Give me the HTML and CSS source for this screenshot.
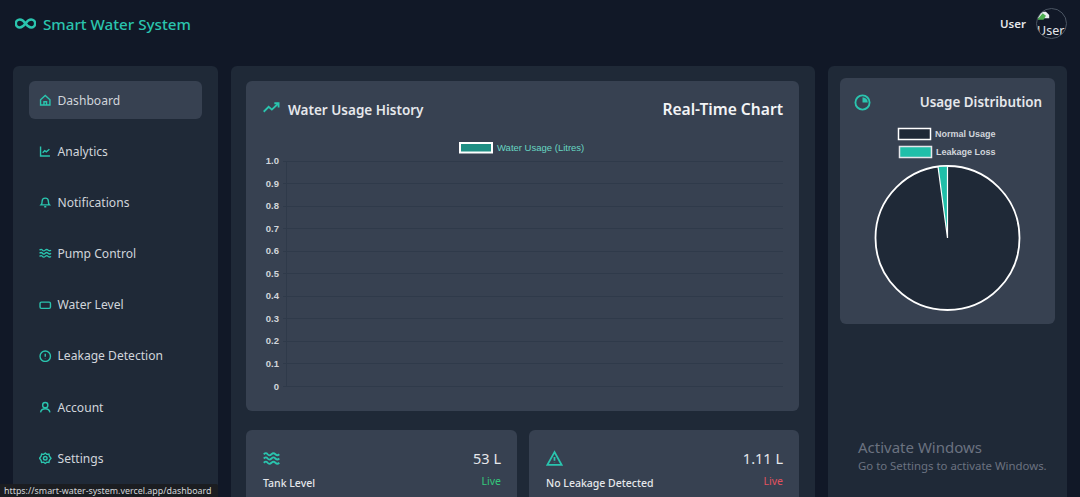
FILE: index.html
```html
<!DOCTYPE html>
<html lang="en">
<head>
<meta charset="utf-8">
<title>Smart Water System</title>
<link rel="stylesheet" href="styles.css">
</head>
<body>
<header class="topbar">
  <div class="brand">
    <svg class="brand-icon" viewBox="0 0 24 24" fill="none" stroke="currentColor" stroke-width="2.800"><path d="M12 12c-2-2.700-4-4.500-6.500-4.500a4.500 4.500 0 0 0 0 9c2.500 0 4.500-1.800 6.500-4.500Zm0 0c2 2.700 4 4.500 6.500 4.500a4.500 4.500 0 0 0 0-9c-2.500 0-4.500 1.800-6.500 4.500Z"/></svg>
    <span>Smart Water System</span>
  </div>
  <div class="user">
    <span>User</span>
    <div class="avatar">
      <svg class="broken" viewBox="0 0 16 16"><path d="M1 2h10l4 4v4H1z" fill="#e8eef0"/><path d="M1 11l6-7 4 3-3 5H1z" fill="#4caf50"/></svg>
      <span class="alt">User</span>
    </div>
  </div>
</header>

<div class="layout">
  <aside class="sidebar">
    <nav class="nav">
      <a class="nav-item active"><svg viewBox="0 0 24 24"><path d="M3 11l9-8 9 8v10H3z"/><path d="M9.500 21v-6h5v6"/></svg>Dashboard</a>
      <a class="nav-item"><svg viewBox="0 0 24 24"><path d="M3 3v18h18"/><path d="M7 15l4-4 3 2 6-5"/></svg>Analytics</a>
      <a class="nav-item"><svg viewBox="0 0 24 24"><path d="M6 10a6 6 0 0 1 12 0c0 5 2 7 2 7H4s2-2 2-7z"/><path d="M10 20.500h4"/></svg>Notifications</a>
      <a class="nav-item"><svg viewBox="0 0 24 24"><path d="M1 6c2.500-2 4-2 5.500 0s3.500 2 5.500 0 3.500-2 5.500 0 3.500 2 5.500 0M1 12c2.500-2 4-2 5.500 0s3.500 2 5.500 0 3.500-2 5.500 0 3.500 2 5.500 0M1 18c2.500-2 4-2 5.500 0s3.500 2 5.500 0 3.500-2 5.500 0 3.500 2 5.500 0"/></svg>Pump Control</a>
      <a class="nav-item"><svg viewBox="0 0 24 24"><rect x="2" y="6" width="20" height="12" rx="2.500"/></svg>Water Level</a>
      <a class="nav-item"><svg viewBox="0 0 24 24"><circle cx="12" cy="12" r="10"/><path d="M12 7v6M12 16.500v.5"/></svg>Leakage Detection</a>
      <a class="nav-item"><svg viewBox="0 0 24 24"><circle cx="12" cy="8" r="5"/><path d="M3 22c1-5 4-7 9-7s8 2 9 7"/></svg>Account</a>
      <a class="nav-item"><svg viewBox="0 0 24 24"><path d="M12 2l3 2.500 4-.5 1 4 3 4-3 4-1 4-4-.5-3 2.500-3-2.500-4 .5-1-4-3-4 3-4 1-4 4 .5z"/><circle cx="12" cy="12" r="3.500"/></svg>Settings</a>
    </nav>
  </aside>

  <main class="panel center">
    <section class="card chart-card">
      <div class="chart-head">
        <h2 class="chart-title"><svg class="trend" viewBox="0 0 24 24"><path d="M1 18l7-7 4.500 4L22 6"/><path d="M16 6h6v6"/></svg><span>Water Usage History</span></h2>
        <h2 class="chart-label">Real-Time Chart</h2>
      </div>
      <svg class="line-chart" viewBox="0 0 553 265" aria-label="Water usage chart">
        <rect class="swatch-teal" x="214" y="7" width="32" height="9.500"/>
        <text class="legend-line" x="251" y="15">Water Usage (Litres)</text>
        <g class="grid">
          <path d="M37 25.500H537M37 47.500H537M37 70.500H537M37 92.500H537M37 115.500H537M37 137.500H537M37 160.500H537M37 182.500H537M37 205.500H537M37 227.500H537M37 250.500H537M40.500 25V251"/>
        </g>
        <g class="ticks">
          <text x="33" y="28">1.0</text><text x="33" y="51">0.9</text><text x="33" y="73">0.8</text><text x="33" y="96">0.7</text><text x="33" y="118">0.6</text><text x="33" y="141">0.5</text><text x="33" y="163">0.4</text><text x="33" y="186">0.3</text><text x="33" y="208">0.2</text><text x="33" y="231">0.1</text><text x="33" y="254">0</text>
        </g>
      </svg>
    </section>
    <div class="stats">
      <section class="card stat">
        <div class="stat-row">
          <svg class="stat-icon" viewBox="0 0 24 24"><path d="M1 6c2.500-2 4-2 5.500 0s3.500 2 5.500 0 3.500-2 5.500 0 3.500 2 5.500 0M1 12c2.500-2 4-2 5.500 0s3.500 2 5.500 0 3.500-2 5.500 0 3.500 2 5.500 0M1 18c2.500-2 4-2 5.500 0s3.500 2 5.500 0 3.500-2 5.500 0 3.500 2 5.500 0"/></svg>
          <span class="stat-value">53 L</span>
        </div>
        <div class="stat-row sub"><span class="stat-name">Tank Level</span><span class="live ok">Live</span></div>
      </section>
      <section class="card stat">
        <div class="stat-row">
          <svg class="stat-icon" viewBox="0 0 24 24"><path d="M12 3L2 21h20z"/><path d="M12 10v5M12 18v.5"/></svg>
          <span class="stat-value">1.11 L</span>
        </div>
        <div class="stat-row sub"><span class="stat-name">No Leakage Detected</span><span class="live bad">Live</span></div>
      </section>
    </div>
  </main>

  <aside class="panel right">
    <section class="card pie-card">
      <div class="pie-head">
        <svg class="pie-icon" viewBox="0 0 24 24"><circle cx="12" cy="12" r="10"/><path d="M12 4.500a7.500 7.500 0 0 1 7.500 7.500H12z" class="pie-fill"/></svg>
        <h2>Usage Distribution</h2>
      </div>
      <svg class="pie-chart" viewBox="0 0 215 196" aria-label="Usage distribution chart">
        <rect class="swatch-dark" x="58.500" y="6.500" width="32" height="11"/>
        <text class="legend-text" x="95" y="15">Normal Usage</text>
        <rect class="swatch-bright" x="59.500" y="24.500" width="32" height="11"/>
        <text class="legend-text" x="96" y="33">Leakage Loss</text>
        <circle class="pie-main" cx="107.500" cy="116" r="72"/>
        <path class="pie-slice" d="M107.500 116L98 44.500Q102 44 107.500 44z"/>
      </svg>
    </section>
  </aside>
</div>

<div class="watermark">
  <div class="wm-title">Activate Windows</div>
  <div class="wm-sub">Go to Settings to activate Windows.</div>
</div>
<div class="status-url">https://smart-water-system.vercel.app/dashboard</div>
</body>
</html>
```
FILE: styles.css
```css
* { box-sizing: border-box; margin: 0; padding: 0; }
html, body { height: 497px; overflow: hidden; }
body {
  background: #111827;
  color: #e5e7eb;
  font-family: "Noto Sans", "Open Sans", sans-serif;
  display: flex;
  flex-direction: column;
}
.topbar {
  flex: 0 0 66px;
  display: flex;
  justify-content: space-between;
  align-items: flex-start;
  padding: 8px 13px 0 15px;
}
.brand { display: flex; align-items: center; gap: 7px; height: 32px; color: #2ac4ae; font-size: 15.200px; font-weight: 500; }
.brand-icon { width: 21px; height: 21px; margin-top: -1px; }
.brand span { margin-top: -1px; }
.user { display: flex; align-items: center; gap: 10px; font-size: 11.500px; font-weight: 600; height: 31px; }
.avatar { position: relative; width: 31px; height: 31px; border-radius: 50%; border: 1px solid #4b5563; overflow: hidden; }
.broken { position: absolute; left: 0; top: 1px; width: 13px; height: 13px; }
.alt { position: absolute; left: 0; top: 14px; font-size: 12.500px; font-weight: 400; line-height: 16px; }

.layout {
  flex: 1;
  min-height: 0;
  display: grid;
  grid-template-columns: 205px 584px 239px;
  gap: 13px;
  padding: 0 13px;
}
.sidebar, .panel { background: #1f2937; border-radius: 6px 6px 0 0; overflow: hidden; }
.sidebar { padding: 15px 16px; }
.nav { display: flex; flex-direction: column; gap: 13.200px; }
.nav-item {
  display: flex;
  align-items: center;
  gap: 6px;
  height: 38px;
  padding: 0 10px;
  border-radius: 6px;
  color: #d1d5db;
  font-size: 12.100px;
}
.nav-item.active { background: #374151; }
.nav-item svg { width: 12.500px; height: 12.500px; flex: none; fill: none; stroke: #2ac4ae; stroke-width: 2.700; }

.card { background: #374151; border-radius: 6px; }
.center { padding: 15px 16px 15px 15px; }
.chart-card { height: 330px; padding: 18px 16px 0 0; }
.chart-head { display: flex; justify-content: space-between; align-items: center; padding-left: 17px; height: 20px; }
.chart-title { display: flex; align-items: center; gap: 8px; font-size: 13.500px; font-weight: 600; color: #e5e7eb; }
.chart-title span { margin-top: 2px; }
.trend { width: 17px; height: 17px; fill: none; stroke: #2ac4ae; stroke-width: 2.600; margin-top: -3px; }
.chart-label { font-size: 15.600px; font-weight: 600; color: #f3f4f6; margin-top: -1px; }
.line-chart { display: block; width: 553px; height: 265px; margin-top: 17px; }
.swatch-teal { fill: #1f8f84; stroke: #fff; stroke-width: 2; }
.legend-line { font: 9.500px "Liberation Sans", sans-serif; fill: #67d6c2; }
.grid path { stroke: #2f3a4a; stroke-width: 1; fill: none; }
.ticks text { font: bold 9.500px "Liberation Sans", sans-serif; fill: #d1d5db; text-anchor: end; }

.stats { display: grid; grid-template-columns: 271px 270px; gap: 12px; margin-top: 19px; }
.stat { height: 100px; padding: 19px 16px 0 17px; }
.stat-row { display: flex; justify-content: space-between; align-items: center; }
.stat-row.sub { margin-top: 6px; align-items: flex-start; }
.stat-icon { width: 17px; height: 17px; fill: none; stroke: #2ac4ae; stroke-width: 2.500; }
.stat-value { font-size: 14.500px; font-weight: 400; color: #e5e7eb; margin-top: -1px; }
.stat-name { font-size: 10.500px; font-weight: 500; color: #e5e7eb; margin-top: 2px; }
.live { font-size: 10.500px; }
.live.ok { color: #34c77b; }
.live.bad { color: #e2525f; }

.right { padding: 12px; }
.pie-card { height: 246px; overflow: hidden; }
.pie-head { display: flex; justify-content: space-between; align-items: center; padding: 14px 13px 0 14px; height: 34px; }
.pie-head h2 { font-size: 13.400px; font-weight: 600; color: #e5e7eb; }
.pie-icon { width: 17px; height: 17px; fill: none; stroke: #2ac4ae; stroke-width: 2.600; }
.pie-fill { fill: #2ac4ae; stroke: none; }
.pie-chart { display: block; width: 215px; height: 196px; margin-top: 10px; }
.swatch-dark { fill: #1f2937; stroke: #fff; stroke-width: 1.500; }
.swatch-bright { fill: #20bfa9; stroke: #e5e7eb; stroke-width: 1.500; }
.legend-text { font: bold 9px "Liberation Sans", sans-serif; fill: #d1d5db; }
.pie-main { fill: #1f2937; stroke: #fff; stroke-width: 1.800; }
.pie-slice { fill: #20bfa9; stroke: #fff; stroke-width: 1.200; }

.watermark { position: absolute; left: 858px; top: 437px; color: #6b7280; }
.wm-title { font-size: 15px; line-height: 20px; }
.wm-sub { font-size: 11.400px; line-height: 17px; }
.status-url {
  position: absolute; left: 0; bottom: 0;
  width: 218px; height: 13px;
  padding-left: 4px;
  background: #1b1d21;
  color: #d4d7da;
  font-size: 8.900px;
  line-height: 13px;
  white-space: nowrap;
  border-top-right-radius: 2px;
}
```
